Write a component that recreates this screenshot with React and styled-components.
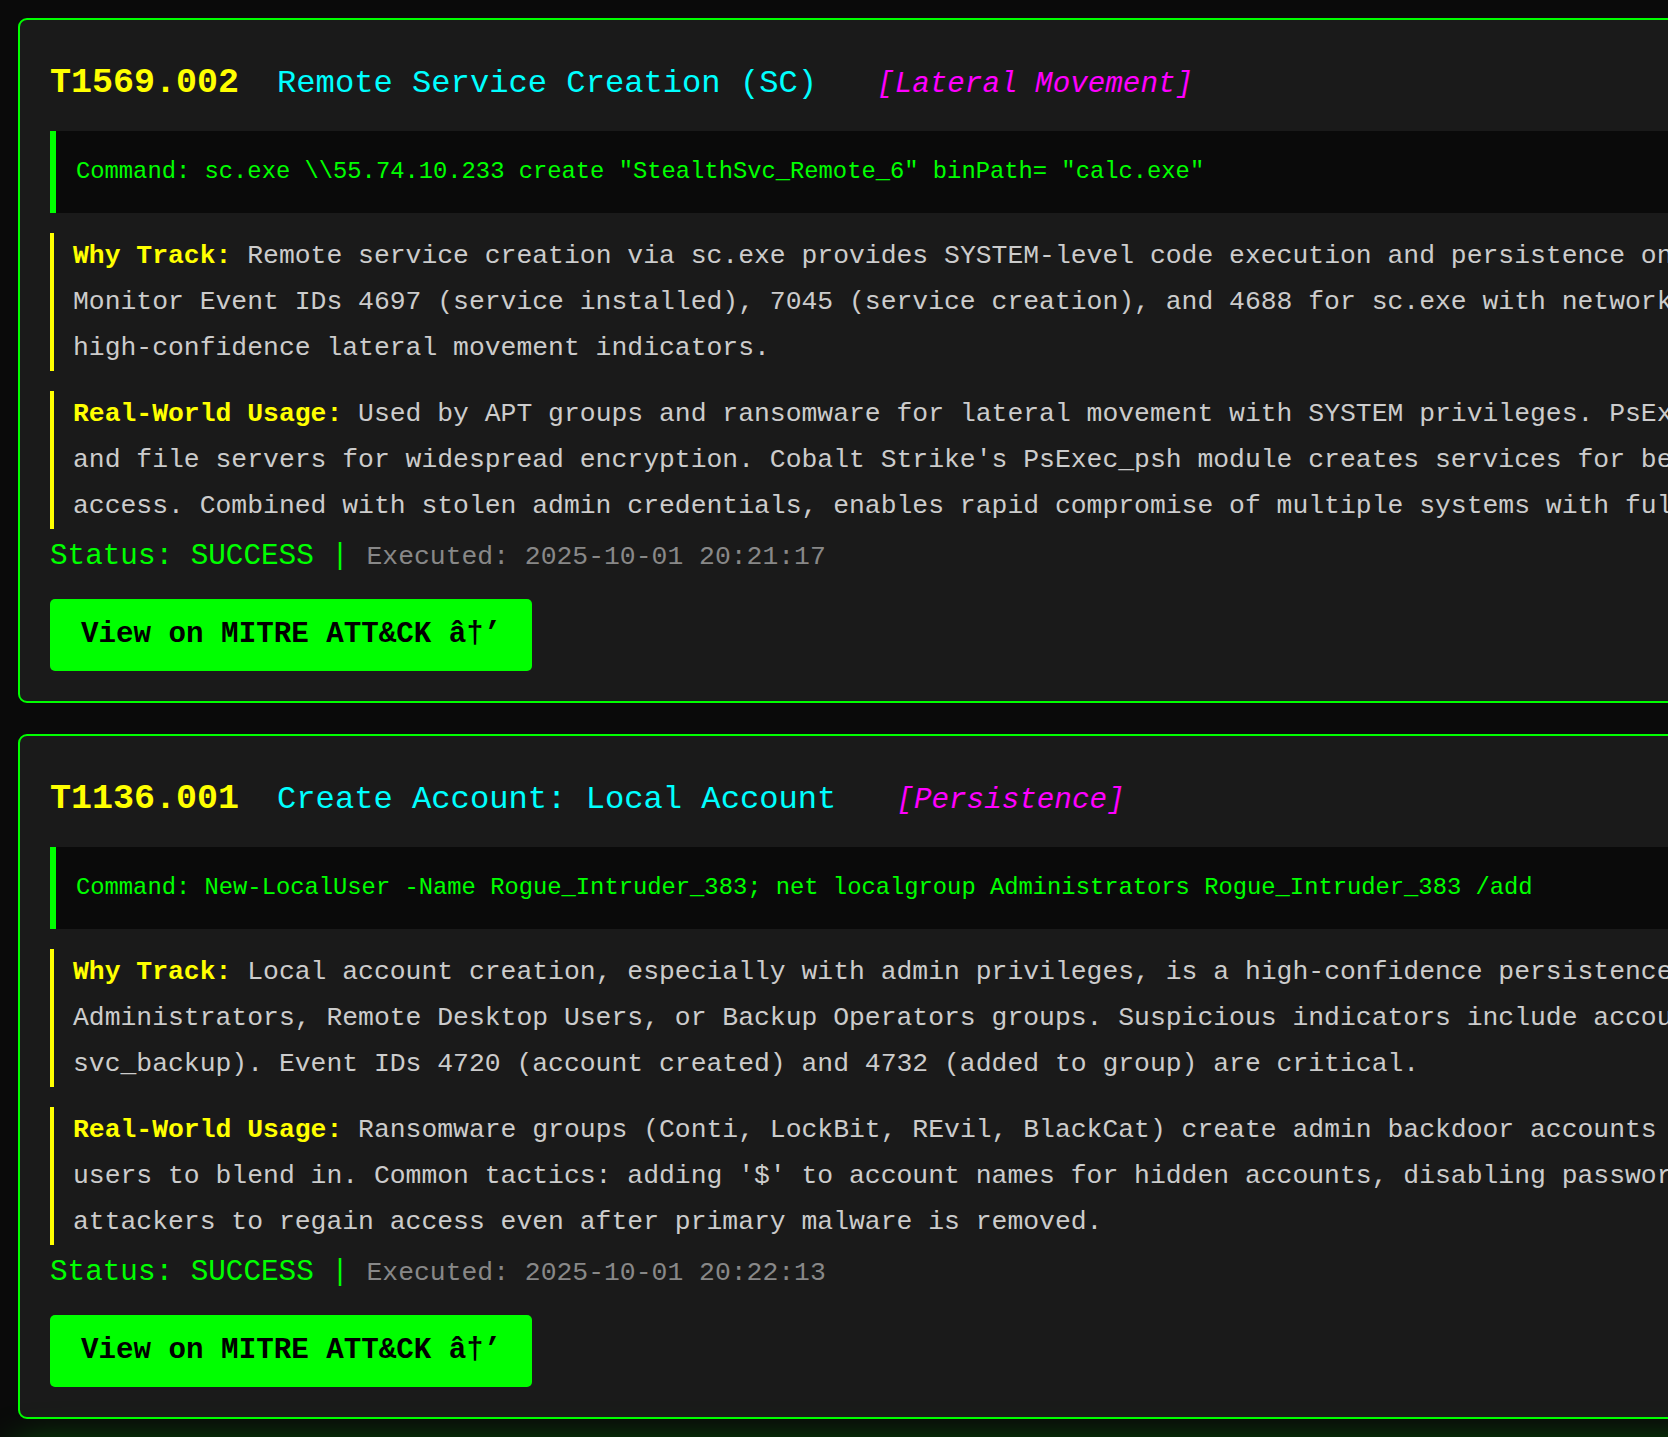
import React from "react";
import styled, { createGlobalStyle } from "styled-components";

const MONO = `"Liberation Mono", "DejaVu Sans Mono", monospace`;

const GlobalStyle = createGlobalStyle`
  html, body {
    margin: 0;
    padding: 0;
    background: #0a0a0a;
  }
`;

const Page = styled.main`
  box-sizing: border-box;
  height: 100vh;
  overflow: hidden;
  padding: 18px 18px 0;
  background: #0a0a0a;
  font-family: ${MONO};
`;

const Card = styled.section`
  box-sizing: content-box;
  width: 1932px;
  padding: 29px 30px 30px;
  margin-bottom: 31px;
  background: #1a1a1a;
  border: 2px solid #00ff00;
  border-radius: 9px;
  box-shadow: ${(p) => (p.$glow ? "0 0 40px rgba(0, 255, 0, 0.5)" : "none")};
`;

const Header = styled.h3`
  display: flex;
  align-items: baseline;
  margin: 13px 0 25px;
  line-height: 42px;
  font-weight: 400;
  white-space: nowrap;
`;

const TechId = styled.span`
  font-size: 35px;
  font-weight: 700;
  color: #ffff00;
  margin-right: 38px;
`;

const TechName = styled.span`
  font-size: 32.15px;
  color: #00ffff;
  margin-right: 60px;
`;

const Tactic = styled.span`
  font-size: 29.26px;
  font-style: italic;
  color: #ff00ff;
`;

const CommandBlock = styled.div`
  background: #0a0a0a;
  border-left: 6px solid #00ff00;
  padding: 22px 20px;
  margin-bottom: 20px;
  font-size: 23.8px;
  line-height: 38px;
  color: #00ff00;
  white-space: pre;
`;

const InfoStack = styled.div`
  display: flex;
  flex-direction: column;
  gap: 20px;
`;

const InfoBlock = styled.p`
  margin: 0;
  border-left: 4px solid #ffff00;
  padding-left: 19px;
  font-size: 26.4px;
  line-height: 46px;
  color: #cccccc;
`;

const Label = styled.strong`
  color: #ffff00;
  font-weight: 700;
`;

const StatusRow = styled.div`
  margin: 5px 0 19px;
  font-size: 29.3px;
  line-height: 46px;
  color: #00ff00;
  white-space: pre;
`;

const Executed = styled.span`
  font-size: 26.4px;
  color: #888888;
`;

const ButtonRow = styled.div`
  display: flex;
`;

const MitreLink = styled.a`
  display: block;
  height: 72px;
  line-height: 72px;
  padding: 0 31px;
  background: #00ff00;
  color: #000000;
  font-size: 29.2px;
  font-weight: 700;
  border-radius: 5px;
  text-decoration: none;
`;

const SummaryTitle = styled.h2`
  margin: 0;
  font-size: 35px;
  line-height: 42px;
  color: #00ff00;
`;

const techniques = [
  {
    id: "T1569.002",
    name: "Remote Service Creation (SC)",
    tactic: "Lateral Movement",
    command:
      'sc.exe \\\\55.74.10.233 create "StealthSvc_Remote_6" binPath= "calc.exe"',
    why:
      "Remote service creation via sc.exe provides SYSTEM-level code execution and persistence on remote systems. Monitor Event IDs 4697 (service installed), 7045 (service creation), and 4688 for sc.exe with network paths. These are high-confidence lateral movement indicators.",
    real:
      "Used by APT groups and ransomware for lateral movement with SYSTEM privileges. PsExec spreads to DCs and file servers for widespread encryption. Cobalt Strike's PsExec_psh module creates services for beacon execution and access. Combined with stolen admin credentials, enables rapid compromise of multiple systems with full privileges.",
    executed: "2025-10-01 20:21:17",
    url: "https://attack.mitre.org/techniques/T1569/002/",
  },
  {
    id: "T1136.001",
    name: "Create Account: Local Account",
    tactic: "Persistence",
    command:
      "New-LocalUser -Name Rogue_Intruder_383; net localgroup Administrators Rogue_Intruder_383 /add",
    why:
      "Local account creation, especially with admin privileges, is a high-confidence persistence indicator. Watch Administrators, Remote Desktop Users, or Backup Operators groups. Suspicious indicators include accounts (helpdesk, svc_backup). Event IDs 4720 (account created) and 4732 (added to group) are critical.",
    real:
      "Ransomware groups (Conti, LockBit, REvil, BlackCat) create admin backdoor accounts that mimic normal users to blend in. Common tactics: adding '$' to account names for hidden accounts, disabling password expiry, allowing attackers to regain access even after primary malware is removed.",
    executed: "2025-10-01 20:22:13",
    url: "https://attack.mitre.org/techniques/T1136/001/",
  },
];

function TechniqueCard({ t }) {
  return (
    <Card>
      <Header>
        <TechId>{t.id}</TechId>
        <TechName>{t.name}</TechName>
        <Tactic>[{t.tactic}]</Tactic>
      </Header>
      <CommandBlock>Command: {t.command}</CommandBlock>
      <InfoStack>
        <InfoBlock>
          <Label>Why Track:</Label> {t.why}
        </InfoBlock>
        <InfoBlock>
          <Label>Real-World Usage:</Label> {t.real}
        </InfoBlock>
      </InfoStack>
      <StatusRow>
        {"Status: SUCCESS | "}
        <Executed>Executed: {t.executed}</Executed>
      </StatusRow>
      <ButtonRow>
        <MitreLink href={t.url}>View on MITRE ATT&amp;CK â†’</MitreLink>
      </ButtonRow>
    </Card>
  );
}

export default function App() {
  return (
    <>
      <GlobalStyle />
      <Page>
        {techniques.map((t) => (
          <TechniqueCard key={t.id} t={t} />
        ))}
        <Card $glow>
          <SummaryTitle>Execution Summary</SummaryTitle>
        </Card>
      </Page>
    </>
  );
}
